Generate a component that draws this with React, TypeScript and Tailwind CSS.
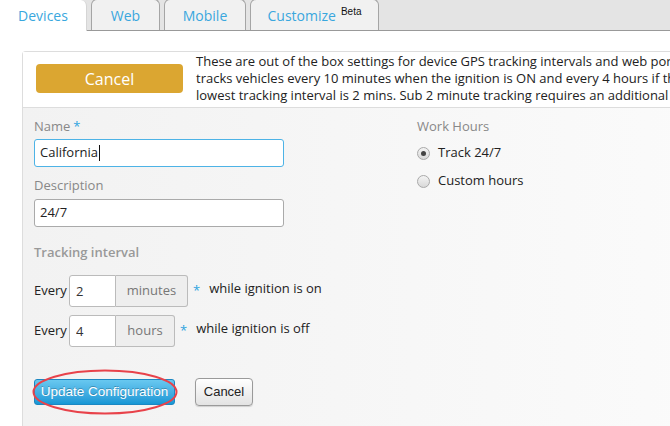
import React from "react";

const sans = "font-['Open_Sans',sans-serif]";
const arial = "font-['Liberation_Sans',Arial,sans-serif]";

function Radio({ checked, label }: { checked?: boolean; label: string }) {
  return (
    <label className="flex items-center gap-[8px] h-[20px] text-[13px] text-[#222]">
      <span className="flex h-[13px] w-[13px] items-center justify-center rounded-full border border-[#a9a9a9] bg-gradient-to-b from-[#f4f4f4] to-[#d8d8d8]">
        {checked && <span className="h-[5px] w-[5px] rounded-full bg-[#444]" />}
      </span>
      {label}
    </label>
  );
}

function IntervalRow({
  value,
  unit,
  unitW,
  note,
}: {
  value: string;
  unit: string;
  unitW: string;
  note: string;
}) {
  return (
    <div className="flex items-center h-[32px]">
      <span className="text-[13px] text-[#222] w-[35px]">Every</span>
      <div className="flex h-[32px]">
        <input
          readOnly
          value={value}
          className="w-[47px] h-full border border-[#bbb] rounded-l-[3px] bg-white px-[6px] text-[13px] text-[#333] outline-none"
        />
        <span
          className={`${unitW} h-full flex items-center justify-center border border-l-0 border-[#bbb] rounded-r-[3px] bg-[#eee] text-[13px] text-[#777]`}
        >
          {unit}
        </span>
      </div>
      <span className="ml-[5px] text-[13px] text-[#2fa4df]">*</span>
      <span className="ml-[9px] -mt-[4px] text-[13px] text-[#222]">{note}</span>
    </div>
  );
}

export default function App() {
  return (
    <div className={`${sans} relative w-[670px] h-[426px] overflow-hidden bg-white`}>
      {/* Tabs */}
      <div className="flex h-[31px] bg-[#e4e4e4] border-b border-[#999]">
        <div className="relative z-10 -mb-px w-[87px] h-[31px] rounded-tr-[6px] border-r border-[#d5d5d5] bg-white flex items-center justify-center text-[14px] text-[#39a7de]">
          Devices
        </div>
        <div className="ml-[4px] w-[69px] h-[31px] -mt-px rounded-t-[6px] border border-b-0 border-[#a5a5a5] bg-[#f1f1f1] flex items-center justify-center text-[14px] text-[#39a7de]">
          Web
        </div>
        <div className="ml-[4px] w-[82px] h-[31px] -mt-px rounded-t-[6px] border border-b-0 border-[#a5a5a5] bg-[#f1f1f1] flex items-center justify-center text-[14px] text-[#39a7de]">
          Mobile
        </div>
        <div className="ml-[4px] w-[129px] h-[31px] -mt-px rounded-t-[6px] border border-b-0 border-[#a5a5a5] bg-[#f1f1f1] flex items-center justify-center text-[14px] text-[#39a7de]">
          Customize
          <span className={`${arial} ml-[5px] -mt-[7px] text-[10px] leading-[12px] text-[#111]`}>Beta</span>
        </div>
      </div>

      {/* Panel */}
      <div className="mt-[20px] ml-[22px] w-[700px] border-l border-t border-[#ddd] rounded-tl-[4px]">
        <div className="flex h-[56px] bg-white border-b border-[#ddd]">
          <button className="shrink-0 ml-[13px] mt-[12px] w-[147px] h-[29px] rounded-[4px] bg-[#dba631] text-white text-[16px]">
            Cancel
          </button>
          <div className="ml-[13px] pt-[1px] text-[13px] leading-[17px] text-[#222] whitespace-nowrap">
            <div>These are out of the box settings for device GPS tracking intervals and web portal</div>
            <div>tracks vehicles every 10 minutes when the ignition is ON and every 4 hours if the ignition is OFF.</div>
            <div>lowest tracking interval is 2 mins. Sub 2 minute tracking requires an additional fee.</div>
          </div>
        </div>

        <div className="flex h-[330px] bg-gradient-to-r from-[#f2f2f2] to-[#fbfbfb]">
          {/* Left column */}
          <div className="shrink-0 w-[394px] pl-[11px] pt-[9px]">
            <div className="h-[18px] text-[13px] text-[#888] leading-[18px]">
              Name<span className="ml-[3px] text-[#2fa4df]">*</span>
            </div>
            <div className="mt-[4px] w-[250px] h-[28px] rounded-[3px] border border-[#4db3e6] bg-white flex items-center px-[5px] text-[13px] text-[#222]">
              California<span className="ml-px h-[16px] w-px bg-[#111]" />
            </div>
            <div className="mt-[9px] h-[18px] text-[13px] text-[#888] leading-[18px]">Description</div>
            <div className="mt-[5px] w-[250px] h-[28px] rounded-[3px] border border-[#aaa] bg-white flex items-center px-[5px] text-[13px] text-[#222]">
              24/7
            </div>
            <div className="mt-[16px] h-[18px] text-[13px] font-semibold text-[#999] leading-[18px]">
              Tracking interval
            </div>
            <div className="mt-[14px] flex flex-col gap-[8px]">
              <IntervalRow value="2" unit="minutes" unitW="w-[72px]" note="while ignition is on" />
              <IntervalRow value="4" unit="hours" unitW="w-[59px]" note="while ignition is off" />
            </div>
            <div className="relative mt-[31px] flex items-center gap-[20px]">
              <button
                className={`${arial} w-[141px] h-[26px] rounded-[3px] border border-[#1b87c2] bg-gradient-to-b from-[#68c8f0] to-[#1597d5] text-[13.5px] text-white [text-shadow:0_-1px_0_rgba(0,0,0,0.25)]`}
              >
                Update Configuration
              </button>
              <button
                className={`${arial} w-[58px] h-[28px] rounded-[4px] border border-[#9a9a9a] bg-gradient-to-b from-white to-[#e3e3e3] text-[13px] text-[#222] shadow-[0_1px_1px_rgba(0,0,0,0.15)]`}
              >
                Cancel
              </button>
              <svg
                className="absolute left-[-3px] top-[-10px] pointer-events-none"
                width="148"
                height="48"
                viewBox="0 0 148 48"
              >
                <ellipse
                  cx="74"
                  cy="24"
                  rx="71.5"
                  ry="21.5"
                  fill="none"
                  stroke="#e8424a"
                  strokeWidth="2"
                />
              </svg>
            </div>
          </div>

          {/* Right column */}
          <div className="pt-[9px]">
            <div className="h-[18px] text-[13px] text-[#888] leading-[18px]">Work Hours</div>
            <div className="mt-[8px] flex flex-col gap-[8px]">
              <Radio checked label="Track 24/7" />
              <Radio label="Custom hours" />
            </div>
          </div>
        </div>
      </div>
    </div>
  );
}
